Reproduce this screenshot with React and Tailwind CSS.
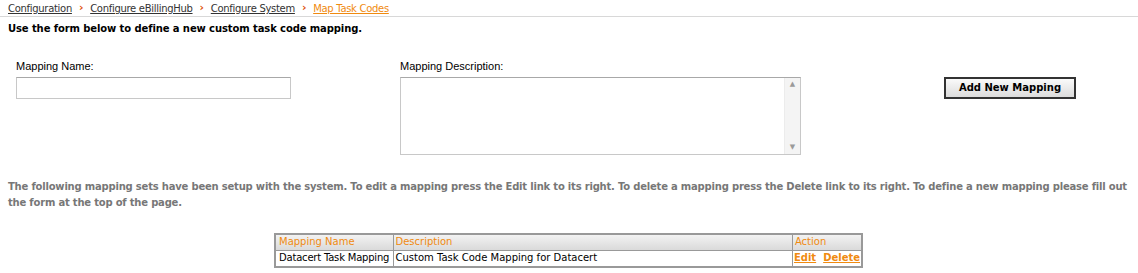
// Map Task Codes page — form for a new custom task code mapping and the list of existing ones.

const crumbs = ["Configuration", "Configure eBillingHub", "Configure System"];

const mappings = [
  { name: "Datacert Task Mapping", description: "Custom Task Code Mapping for Datacert" },
];

function Crumb({ children, last }) {
  return (
    <span className="flex items-center">
      <a href="#" className={last ? "text-[#f08a10] underline" : "text-[#333] underline"}>
        {children}
      </a>
      {!last && <span className="mx-[7px] text-[11px] font-bold text-[#e0500a]">›</span>}
    </span>
  );
}

export default function App() {
  return (
    <div className="w-[1138px] h-[273px] bg-white font-['Tahoma','DejaVu_Sans',sans-serif] text-black">
      {/* Breadcrumb */}
      <div className="flex items-center h-[17px] px-[8px] pt-[1px] text-[10px] border-b border-[#d8d8d8] tracking-[-0.3px]">
        {crumbs.map((c) => (
          <Crumb key={c}>{c}</Crumb>
        ))}
        <Crumb last>Map Task Codes</Crumb>
      </div>

      <p className="px-[8px] pt-[5px] text-[10px] font-bold leading-[14px] tracking-[-0.1px]">
        Use the form below to define a new custom task code mapping.
      </p>

      {/* Form */}
      <div className="flex pl-[16px] pt-[22px]">
        <div className="w-[384px]">
          <label className="block font-['Liberation_Sans',Arial,sans-serif] text-[11px] leading-[14px] mb-[4px] mt-[1px]">
            Mapping Name:
          </label>
          <input
            type="text"
            className="block w-[275px] h-[22px] border border-[#c8c8c8] border-t-[#a8a8a8] bg-white outline-none px-1 text-[11px]"
          />
        </div>
        <div className="w-[544px]">
          <label className="block font-['Liberation_Sans',Arial,sans-serif] text-[11px] leading-[14px] mb-[4px] mt-[1px]">
            Mapping Description:
          </label>
          <div className="flex w-[401px] h-[78px] border border-[#c8c8c8] border-t-[#a8a8a8] bg-white">
            <textarea className="flex-1 resize-none outline-none px-1 text-[11px]" />
            <div className="w-[16px] flex flex-col justify-between items-center bg-[#f4f4f4] border-l border-[#ececec] py-[3px] text-[7px] text-[#9a9a9a] leading-none">
              <span>▲</span>
              <span>▼</span>
            </div>
          </div>
        </div>
        <div className="pt-[19px]">
          <button className="block w-[132px] h-[22px] border-2 border-[#333] bg-gradient-to-b from-[#fafafa] to-[#dcdcdc] text-[10px] font-bold leading-none">
            Add New Mapping
          </button>
        </div>
      </div>

      <p className="pl-[8px] pr-[2px] pt-[24px] text-[10px] font-bold leading-[16px] text-[#777] tracking-[-0.2px]">
        The following mapping sets have been setup with the system. To edit a mapping press the Edit link to its right. To
        delete a mapping press the Delete link to its right. To define a new mapping please fill out the form at the top
        of the page.
      </p>

      {/* Existing mappings */}
      <div className="flex justify-center pt-[22px] pr-[1px]">
        <table className="w-[589px] border-collapse border-2 border-[#999] text-[10px] font-['Verdana','DejaVu_Sans',sans-serif]">
          <thead>
            <tr className="h-[16px] bg-gradient-to-b from-[#f4f4f4] to-[#dadada] text-[#f08a10] text-left">
              <th className="w-[118px] font-normal px-[3px] leading-none border border-[#999]">Mapping Name</th>
              <th className="font-normal px-[2px] leading-none border border-[#999]">Description</th>
              <th className="w-[67px] font-normal px-[2px] leading-none border border-[#999]">Action</th>
            </tr>
          </thead>
          <tbody>
            {mappings.map((m) => (
              <tr key={m.name} className="h-[17px]">
                <td className="px-[3px] leading-none border border-[#999] whitespace-nowrap tracking-[-0.2px]">{m.name}</td>
                <td className="px-[2px] leading-none border border-[#999] whitespace-nowrap">{m.description}</td>
                <td className="px-[1px] leading-none border border-[#999] whitespace-nowrap font-bold text-[10px] text-[#f08a10]">
                  <a href="#" className="underline">Edit</a>
                  <a href="#" className="underline ml-[7px]">Delete</a>
                </td>
              </tr>
            ))}
          </tbody>
        </table>
      </div>
    </div>
  );
}
